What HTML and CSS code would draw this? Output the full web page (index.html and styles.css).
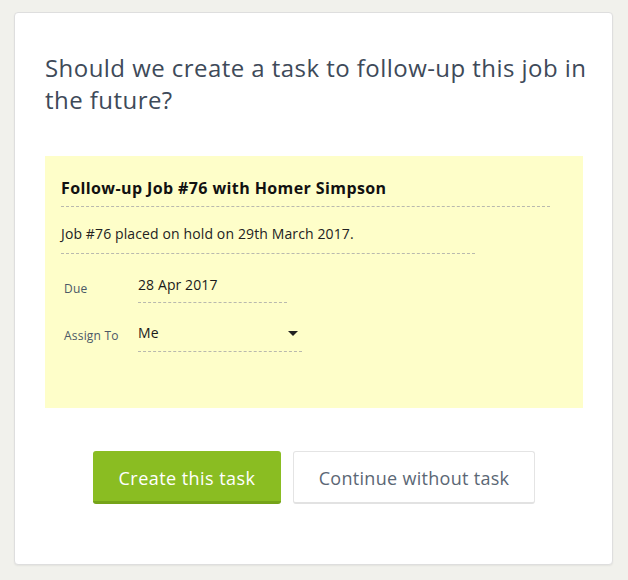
FILE: index.html
```html
<!DOCTYPE html>
<html lang="en">
<head>
<meta charset="utf-8">
<title>Follow-up task</title>
<link rel="stylesheet" href="styles.css">
</head>
<body>
<div class="card">
  <h1 class="question">Should we create a task to follow-up this job in the future?</h1>
  <div class="note">
    <div class="note-title">Follow-up Job #76 with Homer Simpson</div>
    <div class="note-desc">Job #76 placed on hold on 29th March 2017.</div>
    <div class="field">
      <div class="field-label">Due</div>
      <div class="field-value date">28 Apr 2017</div>
    </div>
    <div class="field">
      <div class="field-label">Assign To</div>
      <div class="field-value select">Me<span class="caret"></span></div>
    </div>
  </div>
  <div class="actions">
    <button class="btn btn-primary">Create this task</button>
    <button class="btn btn-secondary">Continue without task</button>
  </div>
</div>
</body>
</html>
```

FILE: styles.css
```css
html, body {
  margin: 0;
  padding: 0;
}
body {
  background: #f1f1ec;
  font-family: "Open Sans", Lato, Arial, sans-serif;
  padding: 12px 15px 15px 14px;
}
.card {
  box-sizing: border-box;
  width: 599px;
  height: 553px;
  background: #fff;
  border: 1px solid #dedede;
  border-radius: 4px;
  box-shadow: 0 1px 2px rgba(0,0,0,0.06);
  padding: 39px 29px 0 30px;
}
.question {
  margin: 0 -14px 0 0;
  font-weight: 400;
  font-size: 24px;
  line-height: 32px;
  letter-spacing: 0.45px;
  color: #3e4a59;
}
.note {
  margin-top: 40px;
  height: 252px;
  box-sizing: border-box;
  background: #fefec9;
  padding: 20px 16px 0 16px;
}
.note-title {
  width: 489px;
  font-weight: 700;
  font-size: 16px;
  line-height: 24px;
  letter-spacing: 0.4px;
  color: #111;
  padding-bottom: 6px;
  border-bottom: 1px dashed #b9b9ae;
}
.note-desc {
  width: 414px;
  font-size: 14px;
  line-height: 18px;
  letter-spacing: 0.12px;
  color: #222;
  padding: 18px 0 10px;
  border-bottom: 1px dashed #b9b9ae;
}
.field {
  display: flex;
  align-items: flex-start;
  margin-top: 21px;
}
.field + .field {
  margin-top: 20px;
}
.field-label {
  width: 74px;
  padding-left: 3px;
  margin-top: 6px;
  font-size: 12px;
  line-height: 16px;
  letter-spacing: 0.2px;
  color: #4b5867;
}
.field + .field .field-label {
  margin-top: 5px;
}
.field-value {
  position: relative;
  font-size: 14px;
  line-height: 20px;
  letter-spacing: 0.1px;
  color: #1a1a1a;
  padding-bottom: 7px;
  border-bottom: 1px dashed #b9b9ae;
}
.date {
  width: 149px;
}
.select {
  width: 164px;
  padding-bottom: 8px;
}
.caret {
  position: absolute;
  right: 4px;
  top: 8px;
  width: 0;
  height: 0;
  border-left: 5px solid transparent;
  border-right: 5px solid transparent;
  border-top: 5px solid #222;
}
.actions {
  display: flex;
  justify-content: center;
  gap: 12px;
  margin-top: 43px;
}
.btn {
  box-sizing: border-box;
  height: 53px;
  border-radius: 3px;
  font-family: "Open Sans", Lato, Arial, sans-serif;
  font-size: 18px;
  padding: 0;
  cursor: pointer;
}
.btn-primary {
  width: 188px;
  background: #8abd22;
  color: #fff;
  border: none;
  border-bottom: 3px solid #75a319;
  padding-top: 3px;
  letter-spacing: 0.45px;
}
.btn-secondary {
  width: 242px;
  background: #fff;
  color: #5b6775;
  border: 1px solid #e4e4e4;
  border-bottom: 2px solid #e2e2e2;
  padding-top: 1px;
  letter-spacing: 0.3px;
}
```
